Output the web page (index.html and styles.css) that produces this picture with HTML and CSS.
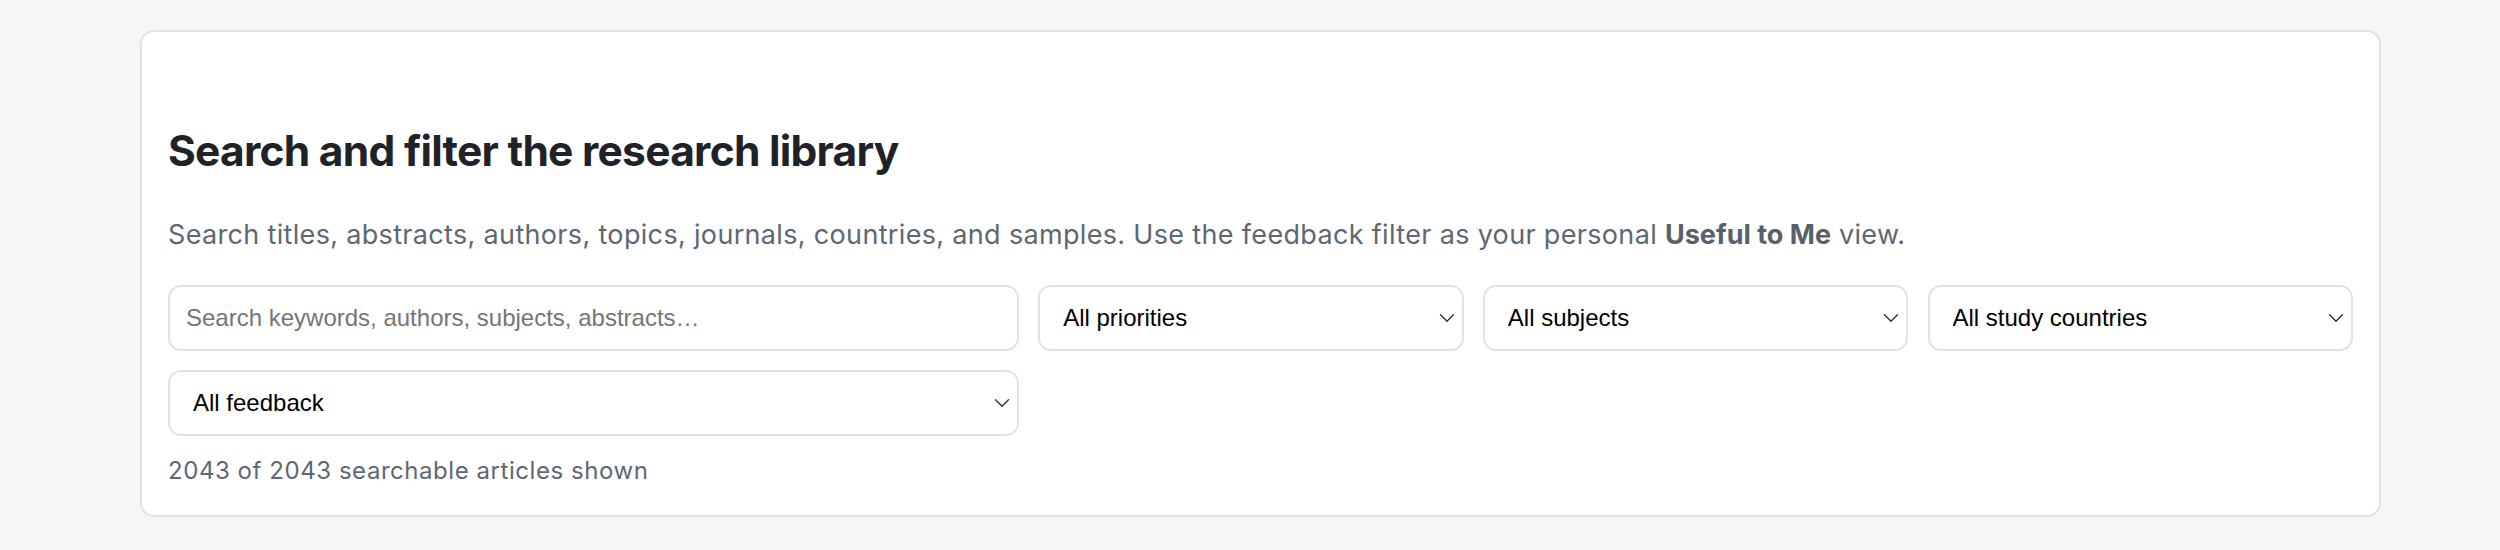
FILE: index.html
```html
<!DOCTYPE html>
<html lang="en">
<head>
<meta charset="utf-8">
<title>Research library</title>
<link rel="stylesheet" href="styles.css">
</head>
<body>
<section class="card">
  <h2 class="title">Search and filter the research library</h2>
  <p class="lead">Search titles, abstracts, authors, topics, journals, countries, and samples. Use the feedback filter as your personal <strong>Useful to Me</strong> view.</p>
  <div class="filters">
    <input class="field search" type="search" placeholder="Search keywords, authors, subjects, abstracts…">
    <select class="field select"><option>All priorities</option></select>
    <select class="field select"><option>All subjects</option></select>
    <select class="field select"><option>All study countries</option></select>
    <select class="field select"><option>All feedback</option></select>
  </div>
  <p class="count">2043 of 2043 searchable articles shown</p>
</section>
</body>
</html>
```
FILE: styles.css
```css
html, body {
  margin: 0;
  padding: 0;
}
body {
  background: #f5f6f8;
  padding: 30px 119px 0 140px;
  font-family: Inter, "Liberation Sans", sans-serif;
}
.card {
  background: #ffffff;
  border: 2px solid #dfe3e8;
  border-radius: 14px;
  padding: 93px 26px 26px 26px;
}
.title {
  margin: 0;
  font-size: 42.5px;
  line-height: 52px;
  font-weight: 700;
  color: #1f2328;
  letter-spacing: -0.74px;
}
.lead {
  margin: 38px 0 0 0;
  font-size: 27px;
  line-height: 40px;
  color: #5d6873;
  letter-spacing: 0.33px;
}
.lead strong {
  font-weight: 700;
  color: #56616b;
  letter-spacing: 0;
}
.filters {
  margin-top: 30px;
  display: grid;
  grid-template-columns: 2fr 1fr 1fr 1fr;
  gap: 19.2px;
}
.field {
  box-sizing: border-box;
  height: 66px;
  margin: 0;
  border: 2px solid #dfe3e8;
  border-radius: 13px;
  background-color: #ffffff;
  font-family: "Liberation Sans", Arial, sans-serif;
  font-size: 24px;
  color: #000000;
  outline: none;
}
.search {
  padding: 0 16px;
  -webkit-appearance: none;
  appearance: none;
}
.search::placeholder {
  color: #757575;
}
.select {
  -webkit-appearance: none;
  appearance: none;
  padding: 0 40px 1px 23px;
  background-image: url("data:image/svg+xml,%3Csvg xmlns='http://www.w3.org/2000/svg' width='16' height='10' viewBox='0 0 16 10'%3E%3Cpath d='M1.5 1.8 L8 8.2 L14.5 1.8' fill='none' stroke='%23333' stroke-width='1.4' stroke-linecap='round' stroke-linejoin='round'/%3E%3C/svg%3E");
  background-repeat: no-repeat;
  background-position: right 7px center;
  background-size: 16px 10px;
}
.count {
  margin: 17px 0 0 0;
  font-size: 24px;
  line-height: 36px;
  color: #5d6873;
  letter-spacing: 0.55px;
}
```
